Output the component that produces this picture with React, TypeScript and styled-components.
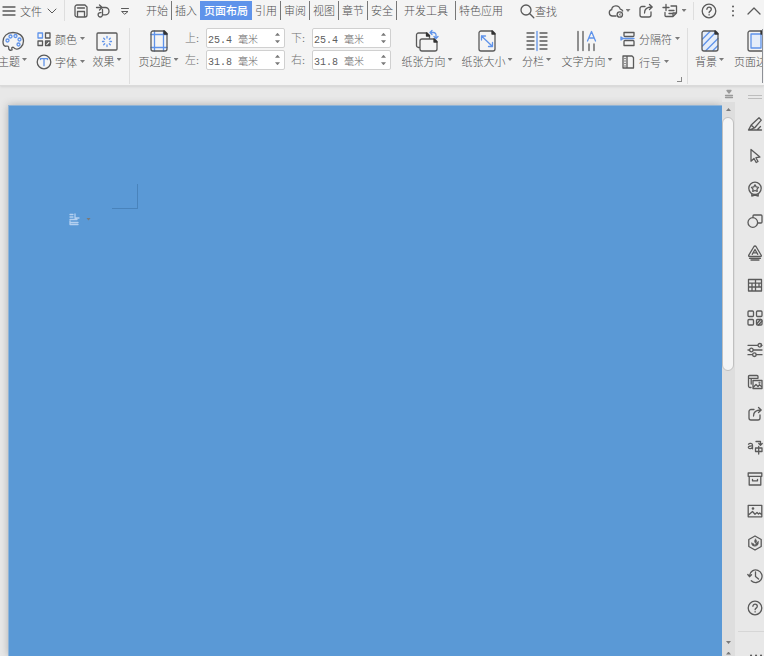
import React from "react";
import styled, { createGlobalStyle, css } from "styled-components";

const ink = "#5a5a5a";
const blue = "#5f93ea";

const GlobalStyle = createGlobalStyle`
  * { box-sizing: border-box; }
  body { margin: 0; background: #e8e8e8; overflow: hidden; }
  body, button, input { font-family: "Liberation Serif", "Noto Sans CJK SC", serif; font-weight: 300; }
  button { border: 0; padding: 0; margin: 0; background: none; color: inherit; }
`;

const Shell = styled.div`
  display: flex;
  flex-direction: column;
  height: 100vh;
  overflow: hidden;
  color: #505050;
  font-size: 11px;
  line-height: 16px;
`;
const Header = styled.header`
  background: #f4f4f4;
  border-bottom: 1px solid #dadada;
  box-shadow: 0 1px 2px #d4d4d4;
  z-index: 1;
`;
const MenuBar = styled.div`
  display: flex;
  height: 21px;
  align-items: center;
  white-space: nowrap;
`;
const Slot = styled.button<{ $w: number }>`
  display: flex;
  align-items: center;
  justify-content: center;
  flex: none;
  width: ${(p) => p.$w}px;
  height: 20px;
`;
const FileButton = styled.button`
  display: flex;
  align-items: center;
  justify-content: space-between;
  flex: none;
  width: 38px;
  margin: 0 6px 0 3px;
  font-size: 11px;
`;
const Rule = styled.span<{ $h: number }>`
  flex: none;
  width: 1px;
  height: ${(p) => p.$h}px;
  background: #dedede;
`;
const Tabs = styled.nav`
  display: flex;
  margin-left: 4px;
`;
const Tab = styled.button<{ $active?: boolean; $wide?: boolean; $line?: boolean }>`
  flex: none;
  height: 19px;
  padding: 0 ${(p) => (p.$wide ? 7 : 3)}px;
  font-size: 11px;
  line-height: 18px;
  border-right: ${(p) => (p.$line ? "1px solid #777" : "0")};
  ${(p) =>
    p.$active &&
    css`
      padding: 0 4px;
      background: ${blue};
      color: #fff;
      font-weight: 500;
    `}
`;
const Search = styled.button`
  display: flex;
  align-items: center;
  margin-left: 13px;
  font-size: 11px;
`;
const Tools = styled.div`
  display: flex;
  align-items: center;
  margin-left: auto;
`;
const Ribbon = styled.div`
  display: flex;
  align-items: flex-start;
  height: 64px;
  padding-top: 8px;
  overflow: hidden;
  white-space: nowrap;
`;
const Big = styled.button<{ $w: number }>`
  display: flex;
  flex-direction: column;
  align-items: center;
  flex: none;
  width: ${(p) => p.$w}px;
  font-size: 11px;
  line-height: 16px;
`;
const BigLabel = styled.span`
  display: flex;
  gap: 2px;
  margin-top: 1px;
`;
const Caret = styled.span<{ $up?: boolean }>`
  flex: none;
  align-self: center;
  width: 5px;
  height: 3px;
  background: #7a7a7a;
  clip-path: ${(p) => (p.$up ? "polygon(50% 0, 100% 100%, 0 100%)" : "polygon(0 0, 100% 0, 50% 100%)")};
`;
const LabelCaret = styled(Caret)`
  align-self: flex-start;
  margin-top: 4px;
`;
const Stack = styled.div<{ $w: number }>`
  display: flex;
  flex-direction: column;
  flex: none;
  gap: 2px;
  width: ${(p) => p.$w}px;
  margin-top: -1px;
`;
const Small = styled.button`
  display: flex;
  align-items: center;
  gap: 3px;
  height: 21px;
  font-size: 11px;
`;
const Margins = styled.div`
  display: grid;
  grid-template-columns: repeat(2, 100px);
  gap: 2px 6px;
  flex: none;
  margin: -1px 6px 0 5px;
`;
const Field = styled.label`
  display: flex;
  align-items: center;
  color: #707070;
`;
const FieldName = styled.span`
  width: 21px;
`;
const Spin = styled.span`
  display: flex;
  width: 79px;
  height: 20px;
  border: 1px solid #d0d0d0;
  border-radius: 2px;
  background: #fff;
`;
const Value = styled.input`
  flex: 1;
  min-width: 0;
  padding: 0 0 0 1px;
  border: 0;
  outline: 0;
  background: transparent;
  color: #606060;
  font-family: "Liberation Mono", "Noto Sans CJK SC", monospace;
  font-size: 10px;
`;
const Steps = styled.span`
  display: flex;
  flex-direction: column;
  justify-content: space-evenly;
  width: 9px;
`;
const Step = styled.button`
  display: flex;
  height: 5px;
`;
const Corner = styled.button`
  align-self: flex-end;
  width: 5px;
  height: 5px;
  margin: 0 5px 3px 0;
  border: solid #888;
  border-width: 0 1px 1px 0;
`;
const Spacer = styled.span<{ $w: number }>`
  flex: none;
  width: ${(p) => p.$w}px;
`;
const GroupRule = styled(Rule)`
  margin-top: -1px;
`;
const Clipped = styled.div`
  display: flex;
  flex: 1;
  min-width: 0;
  height: 54px;
  margin-right: 1px;
  padding-left: 7px;
  border-right: 1px solid #8d9096;
  overflow: hidden;
`;
const Work = styled.div`
  display: flex;
  flex: 1;
  min-height: 0;
`;
const Canvas = styled.main`
  flex: 1;
  display: flex;
  padding: 19px 0 0 8px;
`;
const Sheet = styled.section`
  flex: 1;
  padding-top: 78px;
  background: #5a99d6;
  border: solid #8fb3d6;
  border-width: 1px 0 0 1px;
  box-shadow: 0 0 8px #b0b0b0;
  clip-path: inset(-8px 0 0 -8px);
`;
const CropMark = styled.div`
  width: 26px;
  height: 25px;
  margin-left: 103px;
  border: solid #4983bb;
  border-width: 0 1px 1px 0;
`;
const Paste = styled.button`
  display: flex;
  align-items: center;
  gap: 5px;
  margin: 3px 0 0 58px;
`;
const Scroll = styled.div`
  display: flex;
  flex-direction: column;
  width: 13px;
  background: #dedede;
`;
const ScrollTop = styled.button`
  display: flex;
  align-items: center;
  justify-content: center;
  height: 16px;
  background: #e8e8e8;
`;
const ScrollStep = styled.button<{ $h: number }>`
  display: flex;
  justify-content: center;
  align-items: center;
  height: ${(p) => p.$h}px;
`;
const Track = styled.div`
  flex: 1;
`;
const Thumb = styled.div`
  height: 49%;
  margin-right: 1px;
  border: 1px solid #c0c0c0;
  border-radius: 6px;
  background: #f5f5f5;
`;
const Side = styled.aside`
  display: flex;
  flex-direction: column;
  width: 29px;
  background: #e8e8e8;
  padding-left: 3px;
`;
const Handle = styled.div`
  height: 4px;
  margin: 9px 2px 9px 10px;
  border: solid #bdbdbd;
  border-width: 1px 0;
`;
const SideList = styled.div`
  display: flex;
  flex: 1;
  flex-direction: column;
  padding-right: 1px;
`;
const SideButton = styled.button`
  display: flex;
  flex: 1;
  align-items: center;
  justify-content: flex-end;
`;
const SideMore = styled.button`
  display: flex;
  align-items: flex-end;
  justify-content: flex-end;
  height: 25px;
  margin-top: 7px;
  border-top: 1px solid #d6d6d6;
`;
const Svg = styled.svg`
  display: block;
  flex: none;
  fill: none;
  stroke: ${ink};
  stroke-linecap: round;
  stroke-linejoin: round;
`;

const Icon = ({ s = 16, children }: { s?: number; children: React.ReactNode }) => (
  <Svg width={s} height={s} viewBox={`0 0 ${s} ${s}`} strokeWidth="1.3" aria-hidden="true">
    {children}
  </Svg>
);

const BigButton = ({ w, label, caret = true, children }: { w: number; label: string; caret?: boolean; children: React.ReactNode }) => (
  <Big $w={w}>
    <Icon s={24}>{children}</Icon>
    <BigLabel>
      {label}
      {caret && <LabelCaret />}
    </BigLabel>
  </Big>
);

const MarginField = ({ name, value }: { name: string; value: string }) => (
  <Field>
    <FieldName>{name}:</FieldName>
    <Spin>
      <Value defaultValue={value} />
      <Steps>
        <Step aria-label="增加"><Caret $up /></Step>
        <Step aria-label="减少"><Caret /></Step>
      </Steps>
    </Spin>
  </Field>
);

const paperShape = (
  <>
    <path d="M6 2h11.5L20 4.500V20a2 2 0 0 1-2 2H6a2 2 0 0 1-2-2V4a2 2 0 0 1 2-2Z" />
    <path fill="#333" stroke="#333" d="M17 2v3h3Z" />
  </>
);
const helpShape = (
  <>
    <circle cx="8" cy="8" r="6.8" />
    <path d="M5.9 6.3c0-3 4.4-2.8 4.4 0 0 1.8-2.2 1.8-2.2 3.4M8.1 11.6v.3" />
  </>
);
const shareShape = <path d="M7 3.500H4a2 2 0 0 0-2 2V12a2 2 0 0 0 2 2h7a2 2 0 0 0 2-2V9M6.500 10c0-4 2.500-6 7.500-6M11.500 1.500 14.200 4l-2.700 2.500" />;

const sideTools: [string, React.ReactNode][] = [
  ["样式", <path d="M1.500 14h13M1.500 14l2.700-5L12 1.800l2.300 2.300L7.500 12l-6 2M4.200 9l3 3M10 14l3.500-3.500" />],
  ["选择", <path d="M4 1.500v11.700l3-2.700 2.200 4 1.800-1-2.100-3.800 4-.6Z" />],
  ["素材", <><circle cx="8" cy="7.300" r="6.200" /><path d="m8 3.800 1.200 2 2.300.5-1.500 1.800.2 2.300L8 9.500l-2.200.9.2-2.300-1.500-1.800 2.300-.5ZM4.800 13v2l3.200-.9 3.200.9v-2" /></>],
  ["形状", <><path d="M6 4.500V3a1 1 0 0 1 1-1h7a1 1 0 0 1 1 1v6a1 1 0 0 1-1 1h-3" /><circle cx="5.800" cy="9.500" r="4.800" /></>],
  ["艺术字", <path d="m7 1.500-5.200 8.700c-.4.7 0 1.300.7 1.300h11c.7 0 1.100-.6.7-1.300L9 1.500c-.5-.7-1.500-.7-2 0ZM5.200 9.300 8 4.500l2.800 4.800M6 7.800h4M2.500 13.300h11M4 15h8" />],
  ["表格", <path d="M1.500 2.500h13v11.500h-13ZM1.500 6.200h13M1.500 10h13M5 6.200V14M8.500 2.500V14M12 6.200V10" />],
  ["应用", <><rect x="1" y="1" width="5.500" height="5.500" rx="1" /><rect x="9.500" y="1" width="5.500" height="5.500" rx="1" /><rect x="1" y="9.500" width="5.500" height="5.500" rx="1" /><rect x="9.500" y="9.500" width="5.500" height="5.500" rx="1" /><path d="m10 13.500 3.500-4M11.500 15l3.500-4" /></>],
  ["属性", <><path d="M1 3.300h9.500M14 3.300h1M1 8h1.500M6.300 8H15M1 12.700h4.500M9.300 12.700H15" /><circle cx="12.800" cy="3.300" r="1.800" /><circle cx="4.400" cy="8" r="1.800" /><circle cx="7.400" cy="12.700" r="1.800" /></>],
  ["图库", <><path d="M4 13.500H3A1.500 1.500 0 0 1 1.500 12V2.500a1 1 0 0 1 1-1H10a1 1 0 0 1 1 1V4M1.500 4.300H11M6 6.500h9v8H6ZM4.200 4.500V10" /><path d="m6.500 13 2.500-2.500 2 2 1.500-1.700 2 1.700" /><circle cx="12.500" cy="8.700" r=".4" /></>],
  ["分享", shareShape],
  ["翻译", <><path d="M9 2.500h4.500v3.200M11.800 4.500l1.700 1.700L15.200 4.500M8.500 9H15v3.500H8.500ZM11.700 7.500V15M1.500 5.300c.8-1.400 4-1.300 4 .7v3.800M5.500 7C2 6.800 1.200 7.700 1.400 8.700c.4 1.500 3.200 1.300 4.100-.7" /></>],
  ["归档", <path d="M1.200 2h13.600v3.300H1.200ZM2.200 5.300V14h11.600V5.300M5.500 8.300v1.500h5V8.300" />],
  ["图片", <><path d="M1.200 2.300h13.600v11.500H1.200ZM2 11.500l3.500-3 2.500 2.700 2-1.700 1.500 1.500 1.200-1 1.800 1.500" /><circle cx="6" cy="5.500" r=".7" /></>],
  ["环保", <><path d="m8 1 6.200 3.500v7L8 15l-6.200-3.500v-7Z" /><path fill={ink} d="M8.500 4c2 2 1.500 3 0 4.200C7 7 7.200 5.500 8.500 4ZM11.500 6.500c.3 3-1 4.500-3.500 4.800.2-2.800 1.500-4 3.500-4.800ZM4.500 8c2 0 3 1 3.500 3.300C5.500 11.300 4.500 10 4.500 8Z" strokeWidth=".4" /></>],
  ["历史", <path d="M2.500 7.500a6.300 6.300 0 1 1 1.800 5.200M.8 6.500l1.700 2.200 2-2M8.500 4v4.500l3 2.500" />],
  ["帮助", helpShape],
];

export default function App() {
  return (
    <Shell>
      <GlobalStyle />
      <Header>
        <MenuBar>
          <Slot $w={17} aria-label="菜单"><Icon><path d="M2 4h12M2 8h12M2 12h12" /></Icon></Slot>
          <FileButton>文件<Icon s={12}><path d="m2 4 4 4 4-4" strokeWidth="1" /></Icon></FileButton>
          <Rule $h={21} />
          <Slot $w={31} aria-label="保存"><Icon><path d="M2 4a2 2 0 0 1 2-2h8l2 2v8a2 2 0 0 1-2 2H4a2 2 0 0 1-2-2ZM4.500 5h7M4.500 14V8.500h7V14" /></Icon></Slot>
          <Slot $w={14} aria-label="撤销"><Icon><path d="M1.500 4.500h8.800a3.700 3.700 0 0 1 0 7.400H7.500M4.500 2l2.700 2.500-2.700 2.500M7.500 6.500v5.300a2.200 2.200 0 1 1-2.200-2.200H6" /></Icon></Slot>
          <Slot $w={29} aria-label="更多"><Icon s={10}><path d="M1.500 2.500h7M2 5.500h6L5 8Z" strokeWidth="1" /></Icon></Slot>
          <Tabs>
            <Tab $line>开始</Tab>
            <Tab>插入</Tab>
            <Tab $active>页面布局</Tab>
            <Tab $line>引用</Tab>
            <Tab $line>审阅</Tab>
            <Tab $line>视图</Tab>
            <Tab $line>章节</Tab>
            <Tab $line>安全</Tab>
            <Tab $wide $line>开发工具</Tab>
            <Tab>特色应用</Tab>
          </Tabs>
          <Search>
            <Icon><circle cx="7" cy="7" r="5" /><path d="m10.800 10.800 4 4" /></Icon>
            查找
          </Search>
          <Tools>
            <Slot $w={17} aria-label="云"><Icon><path d="M8 13H4.500A3.200 3.200 0 0 1 3.700 6.700C4 2 11 1.500 12.200 6.200c1.500.2 2.200.9 2.500 1.800" /><circle cx="11.800" cy="11.500" r="2.700" /><path d="m11 10.700 1.600 1.600m0-1.600L11 12.300" strokeWidth=".7" /></Icon></Slot>
            <Slot $w={8} aria-label="云选项"><Caret /></Slot>
            <Slot $w={27} aria-label="分享"><Icon>{shareShape}</Icon></Slot>
            <Slot $w={22} aria-label="新建"><Icon><path d="M9 3h5.500v7L11 13.500H4a1 1 0 0 1-1-1V9.500M1 4.500h6M4 1.500v6M7 7.500h5M7 10.500h3.500M14.500 10H11v3.500" /></Icon></Slot>
            <Slot $w={6} aria-label="新建选项"><Caret /></Slot>
            <Spacer $w={6} />
            <Rule $h={18} />
            <Slot $w={29} aria-label="帮助"><Icon>{helpShape}</Icon></Slot>
            <Slot $w={20} aria-label="选项"><Icon><path d="M8 3.500v.1M8 8v.1M8 12.500v.1" strokeWidth="2" /></Icon></Slot>
            <Slot $w={21} aria-label="收起"><Icon><path d="m2 11 6-6 6 6" /></Icon></Slot>
          </Tools>
        </MenuBar>

        <Ribbon>
          <BigButton w={25} label="主题">
            <path d="M11 21c-2 .8-3.500-.5-3.300-2 .2-1.800-1-2.200-2.500-1.800C3 17.700 2 15.500 2 12.500 2 7.500 6 3.500 12 3.500s10.500 3.500 10.500 8.500-4.500 9-7.500 8-2-2.500-4-1.500c-1 .5.500 1.800 0 2.500Z" />
            <g stroke={blue}><circle cx="6.500" cy="11.500" r="1.500" /><circle cx="9.500" cy="7.500" r="1.500" /><circle cx="14.500" cy="7" r="1.500" /><circle cx="18.500" cy="10.500" r="1.500" /><circle cx="17.500" cy="15.500" r="1.500" /></g>
          </BigButton>
          <Spacer $w={11} />
          <Stack $w={54}>
            <Small><Icon><path stroke={blue} d="M2 2h4.500v5H2Z" /><path d="M9.500 2H14v5H9.500ZM2 10h4.500v4.500H2ZM9.500 10H14v4.500H9.500Zm0 3 3-3m-1 4.500L14 12" /></Icon>颜色<Caret /></Small>
            <Small><Icon><circle cx="8" cy="8" r="6.800" /><path stroke={blue} d="M4.500 5.500V4.700h7v.8M8 4.700v7" /></Icon>字体<Caret /></Small>
          </Stack>
          <BigButton w={34} label="效果">
            <rect x="2" y="4" width="20" height="17" rx="1" />
            <path stroke={blue} d="M12 7.500V9M12 16v1.500M7.500 12.500H9M15 12.500h1.500M8.700 9.200l1 1M14.300 14.800l1 1M15.300 9.200l-1 1M9.700 14.800l-1 1" />
          </BigButton>
          <Spacer $w={5} />
          <GroupRule $h={56} />
          <Spacer $w={7} />
          <BigButton w={43} label="页边距">
            <path stroke={blue} d="M7.500 2v20M16.500 2v20M4 5.500h16M4 18.500h16" />
            {paperShape}
          </BigButton>
          <Margins>
            <MarginField name="上" value="25.4 毫米" />
            <MarginField name="下" value="25.4 毫米" />
            <MarginField name="左" value="31.8 毫米" />
            <MarginField name="右" value="31.8 毫米" />
          </Margins>
          <BigButton w={60} label="纸张方向">
            <path d="M5 18.500H3.500a2 2 0 0 1-2-2V6a2 2 0 0 1 2-2H12l2.500 2.500V10M7 10h12.500l2.500 2.500V20a2 2 0 0 1-2 2H7a2 2 0 0 1-2-2v-8a2 2 0 0 1 2-2Z" />
            <path fill="#333" stroke="#333" d="M11.500 4v3h3ZM19 10v3h3Z" /><path stroke={blue} d="M15 3.500h3.500A2.500 2.500 0 0 1 21 6v3M17 1.500l-2 2 2 2M19 7.500l2 2 2-2" />
          </BigButton>
          <BigButton w={60} label="纸张大小">
            {paperShape}
            <path stroke={blue} d="m6.500 7 11 10.500M6.500 11V7h4M17.500 13.500v4h-4" />
          </BigButton>
          <BigButton w={39} label="分栏">
            <path d="M2 4h7M2 8h7M2 12h7M2 16h7M2 20h7M15 4h7M15 8h7M15 12h7M15 16h7M15 20h7" /><path stroke={blue} d="M12 2.500v19" />
          </BigButton>
          <BigButton w={62} label="文字方向">
            <path d="M3 2.500v19M8 2.500v19M14 15v6.500M19 15v6.500" /><path stroke={blue} d="m12.500 12 4-9.500 4 9.500M14 9h5" />
          </BigButton>
          <Spacer $w={2} />
          <Stack $w={57}>
            <Small><Icon><path d="M4 1.500v3a1 1 0 0 0 1 1h8a1 1 0 0 0 1-1v-3ZM4 14.500v-4a1 1 0 0 1 1-1h8a1 1 0 0 1 1 1v4Z" /><path stroke={blue} d="M3 7.500h11M1 6v3l2-1.500Z" /></Icon>分隔符<Caret /></Small>
            <Small><Icon><path d="M3 2h9l1.500 1.500V14H3ZM7 2v12" /><path d="M5 4.500v.1M5 7v.1M5 9.500v.1M5 12v.1" strokeWidth="1.500" /></Icon>行号<Caret /></Small>
          </Stack>
          <Corner aria-label="页面设置" />
          <GroupRule $h={56} />
          <Spacer $w={4} />
          <BigButton w={35} label="背景">
            <path fill="#e5edf9" stroke="none" d="M4 2h16v20H4Z" />
            <path stroke={blue} d="m4.500 10 7.500-7.500M4.500 17 17 4M8 21.500l12-12M15 21.500l4.500-4.500" />
            {paperShape}
          </BigButton>
          <Clipped>
            <BigButton w={44} label="页面边框" caret={false}>
              <path stroke={blue} fill="#e5edf9" d="M7 5h10v14H7Z" />
              {paperShape}
            </BigButton>
          </Clipped>
        </Ribbon>
      </Header>

      <Work>
        <Canvas>
          <Sheet>
            <CropMark />
            <Paste aria-label="段落布局">
              <Icon s={14}><path stroke="#b4d0f0" d="M3 2.500h3M3 5h3M3 7.500h7M3 10.500h8M3 12.500h8M8 2v4h4M3 9v3" /></Icon>
              <Caret />
            </Paste>
          </Sheet>
        </Canvas>
        <Scroll>
          <ScrollTop aria-label="标尺"><Icon s={10}><path stroke="#999" fill="#999" d="M3 1.500h4L5 4ZM1.500 6.500h7M1.500 8.500h7" /></Icon></ScrollTop>
          <ScrollStep $h={15} aria-label="向上"><Caret $up /></ScrollStep>
          <Track><Thumb /></Track>
          <ScrollStep $h={15} aria-label="向下"><Caret /></ScrollStep>
          <ScrollStep $h={6} aria-label="上一页"><Caret $up /></ScrollStep>
        </Scroll>
        <Side>
          <Handle />
          <SideList>
            {sideTools.map(([name, shape]) => (
              <SideButton key={name} aria-label={name}>
                <Icon>{shape}</Icon>
              </SideButton>
            ))}
          </SideList>
          <SideMore aria-label="更多"><Icon s={16}><path d="M3 15.500h.1M8 15.500h.1M13 15.500h.1" strokeWidth="2" /></Icon></SideMore>
        </Side>
      </Work>
    </Shell>
  );
}
